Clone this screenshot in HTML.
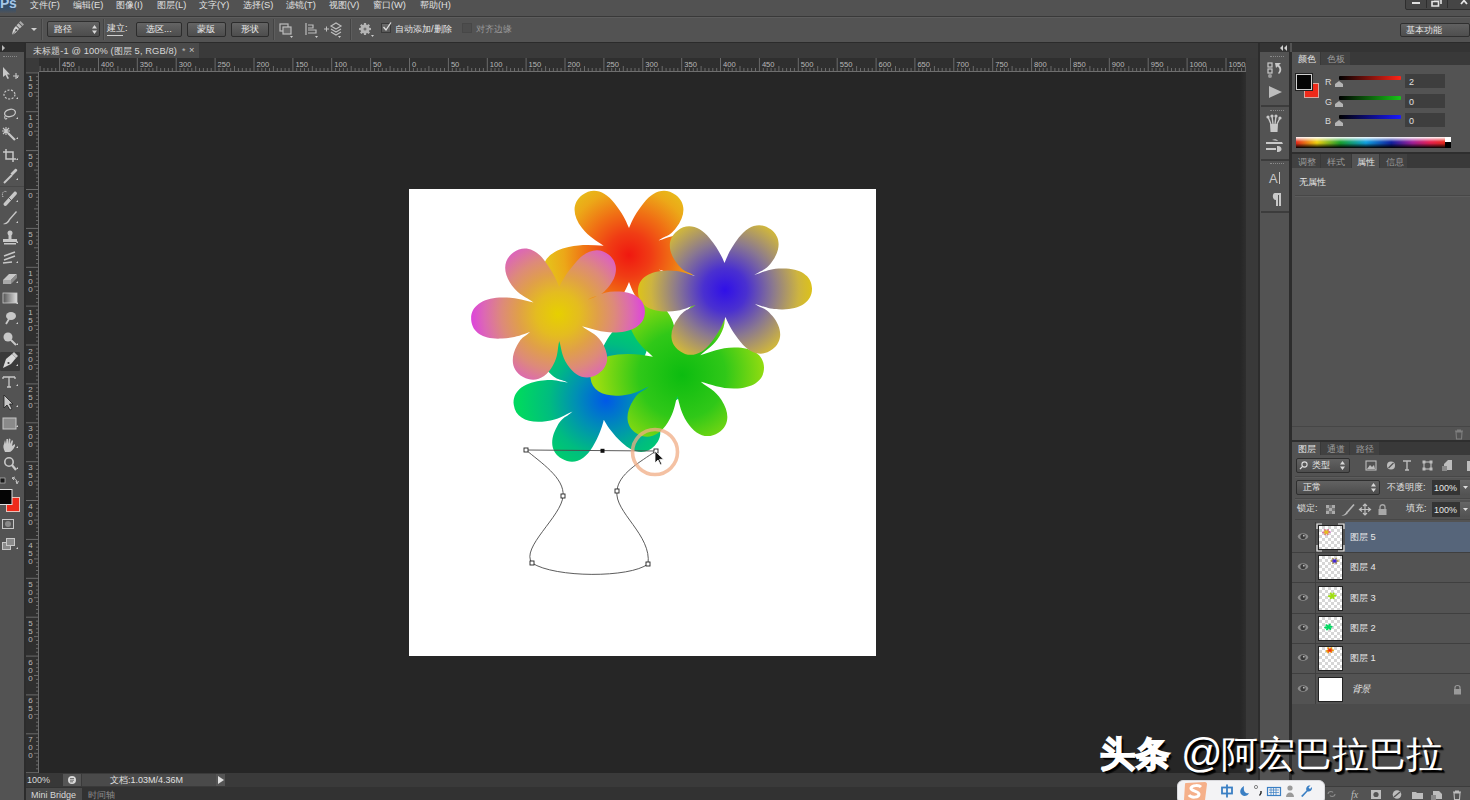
<!DOCTYPE html><html><head><meta charset="utf-8"><style>
html,body{margin:0;padding:0;}
body{width:1470px;height:800px;overflow:hidden;position:relative;background:#535353;font-family:"Liberation Sans",sans-serif;}
.a{position:absolute;}
.t{position:absolute;white-space:nowrap;line-height:1;}
svg{position:absolute;overflow:visible;}
</style></head><body>
<div class="a" style="left:0px;top:0px;width:1470px;height:16px;background:#525252;"></div>
<div class="a" style="left:0px;top:16px;width:1470px;height:1px;background:#393939;"></div>
<div class="a" style="left:0px;top:17px;width:1470px;height:1px;background:#5d5d5d;"></div>
<div class="a" style="left:0px;top:0px;width:16px;height:13px;background:linear-gradient(#2a4866,#3a5068 70%,#4f5358);"></div>
<div class="t" style="left:0px;top:-4px;font-size:14px;font-weight:bold;color:#a6c6e6;letter-spacing:-0.3px;">Ps</div>
<div class="t" style="left:30px;top:1px;font-size:9.3px;color:#e0e0e0;">文件(F)</div>
<div class="t" style="left:73px;top:1px;font-size:9.3px;color:#e0e0e0;">编辑(E)</div>
<div class="t" style="left:116px;top:1px;font-size:9.3px;color:#e0e0e0;">图像(I)</div>
<div class="t" style="left:157px;top:1px;font-size:9.3px;color:#e0e0e0;">图层(L)</div>
<div class="t" style="left:199px;top:1px;font-size:9.3px;color:#e0e0e0;">文字(Y)</div>
<div class="t" style="left:243px;top:1px;font-size:9.3px;color:#e0e0e0;">选择(S)</div>
<div class="t" style="left:286px;top:1px;font-size:9.3px;color:#e0e0e0;">滤镜(T)</div>
<div class="t" style="left:329px;top:1px;font-size:9.3px;color:#e0e0e0;">视图(V)</div>
<div class="t" style="left:373px;top:1px;font-size:9.3px;color:#e0e0e0;">窗口(W)</div>
<div class="t" style="left:420px;top:1px;font-size:9.3px;color:#e0e0e0;">帮助(H)</div>
<div class="a" style="left:1405px;top:-2px;width:65px;height:10px;background:#454545;border:1px solid #2e2e2e;border-radius:2px;"></div>
<div class="a" style="left:1426px;top:0px;width:1px;height:8px;background:#2e2e2e;"></div>
<div class="a" style="left:1447px;top:0px;width:1px;height:8px;background:#2e2e2e;"></div>
<div class="a" style="left:1412px;top:2px;width:8px;height:2px;background:#e0e0e0;"></div>
<svg style="left:1430px;top:-3px" width="40" height="10"><path d="M4 2.5 H11 V7 M2 4.5 H8.5 V9 H2Z" fill="none" stroke="#e4e4e4" stroke-width="1.6"/><path d="M31 0 L37 7 M37 0 L31 7" stroke="#e4e4e4" stroke-width="1.8"/></svg>
<div class="a" style="left:0px;top:18px;width:1470px;height:24px;background:#535353;"></div>
<div class="a" style="left:0px;top:42px;width:1470px;height:1px;background:#2b2b2b;"></div>
<svg style="left:8px;top:19px" width="18" height="18" viewBox="0 0 18 18">
<path d="M4 16 C4.5 12 5.5 9 8 7 L11 10 C9 12.5 7 14.5 4 16Z" fill="#d4d4d4"/><path d="M8.5 6.2 L10.5 4.2 L13.8 7.5 L11.8 9.5Z" fill="#bdbdbd"/><path d="M11 3.5 L12.5 2 L16 5.5 L14.5 7Z" fill="#a8a8a8"/>
<circle cx="8.3" cy="11.2" r="1.1" fill="#505050"/><path d="M4 16 L8 11.5" stroke="#505050" stroke-width="0.7"/></svg>
<svg style="left:31px;top:28px" width="6" height="4"><path d="M0 0 L6 0 L3 3Z" fill="#cfcfcf"/></svg>
<div class="a" style="left:41px;top:19px;width:1px;height:21px;background:#444;"></div>
<div class="a" style="left:42px;top:19px;width:1px;height:21px;background:#5e5e5e;"></div>
<div class="a" style="left:47px;top:21px;width:53px;height:16px;background:linear-gradient(#626262,#4c4c4c);border:1px solid #2f2f2f;border-radius:2px;box-sizing:border-box;"></div>
<div class="t" style="left:54px;top:25px;font-size:9.3px;color:#e8e8e8;">路径</div>
<svg style="left:92px;top:25px" width="5" height="9"><path d="M0 3.5 L2.5 0 L5 3.5Z M0 5.5 L2.5 9 L5 5.5Z" fill="#d8d8d8"/></svg>
<div class="a" style="left:103px;top:19px;width:1px;height:21px;background:#444;"></div>
<div class="a" style="left:104px;top:19px;width:1px;height:21px;background:#5e5e5e;"></div>
<div class="t" style="left:107px;top:24px;font-size:9.3px;color:#e8e8e8;">建立:</div>
<div class="a" style="left:107px;top:35px;width:16px;height:1px;background:#cfcfcf;"></div>
<div class="a" style="left:136px;top:22px;width:46px;height:15px;background:linear-gradient(#646464,#4d4d4d);border:1px solid #2c2c2c;border-radius:2px;box-sizing:border-box;"></div>
<div class="t" style="left:146px;top:25px;font-size:9.3px;color:#e8e8e8;">选区...</div>
<div class="a" style="left:187px;top:22px;width:39px;height:15px;background:linear-gradient(#646464,#4d4d4d);border:1px solid #2c2c2c;border-radius:2px;box-sizing:border-box;"></div>
<div class="t" style="left:197px;top:25px;font-size:9.3px;color:#e8e8e8;">蒙版</div>
<div class="a" style="left:231px;top:22px;width:38px;height:15px;background:linear-gradient(#646464,#4d4d4d);border:1px solid #2c2c2c;border-radius:2px;box-sizing:border-box;"></div>
<div class="t" style="left:241px;top:25px;font-size:9.3px;color:#e8e8e8;">形状</div>
<div class="a" style="left:273px;top:19px;width:1px;height:21px;background:#444;"></div>
<div class="a" style="left:274px;top:19px;width:1px;height:21px;background:#5e5e5e;"></div>
<svg style="left:278px;top:21px" width="70" height="18">
<rect x="2" y="3" width="8" height="7" fill="none" stroke="#bdbdbd" stroke-width="1.2"/><rect x="5" y="6" width="8" height="7" fill="#6a6a6a" stroke="#bdbdbd" stroke-width="1.2"/><path d="M12 15 L15 15 L13.5 17Z" fill="#ccc"/>
<path d="M28 2 L28 14 M30 4 h5 v3 h-5 M30 9 h8 v3 h-8" fill="none" stroke="#bdbdbd" stroke-width="1.2"/><path d="M37 15 L40 15 L38.5 17Z" fill="#ccc"/>
<path d="M46 8 h5 M48.5 5.5 v5" stroke="#c0c0c0" stroke-width="1"/><path d="M53 5 L58 2 L63 5 L58 8Z M53 8 L58 11 L63 8 M53 11 L58 14 L63 11" fill="none" stroke="#bdbdbd" stroke-width="1.2"/><path d="M60 15 L63 15 L61.5 17Z" fill="#ccc"/>
</svg>
<div class="a" style="left:350px;top:19px;width:1px;height:21px;background:#444;"></div>
<div class="a" style="left:351px;top:19px;width:1px;height:21px;background:#5e5e5e;"></div>
<svg style="left:358px;top:22px" width="18" height="16"><g transform="translate(7,7)" fill="#b4b4b4">
<circle r="4.6"/><rect x="-1.1" y="-6" width="2.2" height="3" transform="rotate(0)"/><rect x="-1.1" y="-6" width="2.2" height="3" transform="rotate(45)"/><rect x="-1.1" y="-6" width="2.2" height="3" transform="rotate(90)"/><rect x="-1.1" y="-6" width="2.2" height="3" transform="rotate(135)"/><rect x="-1.1" y="-6" width="2.2" height="3" transform="rotate(180)"/><rect x="-1.1" y="-6" width="2.2" height="3" transform="rotate(225)"/><rect x="-1.1" y="-6" width="2.2" height="3" transform="rotate(270)"/><rect x="-1.1" y="-6" width="2.2" height="3" transform="rotate(315)"/><circle r="1.5" fill="#707070"/></g><path d="M13 13 L16 13 L14.5 15Z" fill="#ccc"/></svg>
<div class="a" style="left:381px;top:23px;width:10px;height:10px;background:linear-gradient(#6a6a6a,#585858);border:1px solid #3a3a3a;box-sizing:border-box;"></div>
<svg style="left:381px;top:21px" width="12" height="12"><path d="M2.5 6 L5 9 L10 1.5" fill="none" stroke="#e0e0e0" stroke-width="1.3"/></svg>
<div class="t" style="left:395px;top:25px;font-size:9.3px;color:#e8e8e8;">自动添加/删除</div>
<div class="a" style="left:462px;top:23px;width:10px;height:10px;background:#4d4d4d;border:1px solid #474747;box-sizing:border-box;"></div>
<div class="t" style="left:476px;top:25px;font-size:9.3px;color:#9a9a9a;">对齐边缘</div>
<div class="a" style="left:1400px;top:23px;width:70px;height:14px;background:linear-gradient(#616161,#4e4e4e);border:1px solid #2f2f2f;border-radius:2px;box-sizing:border-box;"></div>
<div class="t" style="left:1406px;top:26px;font-size:9.3px;color:#e8e8e8;">基本功能</div>
<div class="a" style="left:0px;top:43px;width:25px;height:757px;background:#535353;"></div>
<div class="a" style="left:0px;top:43px;width:25px;height:9px;background:#2e2e2e;"></div>
<svg style="left:2px;top:45px" width="4" height="6"><path d="M0 0 L3 3 L0 6Z" fill="#bbb"/></svg>
<div class="a" style="left:24px;top:43px;width:2px;height:757px;background:#2c2c2c;"></div>
<div class="a" style="left:3px;top:56px;width:14px;height:1px;border-top:1px dotted #8a8a8a;"></div>
<div class="a" style="left:0px;top:186px;width:24px;height:1px;background:#474747;"></div>
<div class="a" style="left:0px;top:352px;width:20px;height:19px;background:#3a3a3a;border-radius:1px;"></div>
<svg style="left:0;top:0" width="26" height="560" viewBox="0 0 26 560" fill="#c8c8c8" stroke="#c8c8c8"><path d="M16 78 L18 76 L18 78Z" stroke="none" fill="#d0d0d0"/><path d="M16 99 L18 97 L18 99Z" stroke="none" fill="#d0d0d0"/><path d="M16 119 L18 117 L18 119Z" stroke="none" fill="#d0d0d0"/><path d="M16 139 L18 137 L18 139Z" stroke="none" fill="#d0d0d0"/><path d="M16 160 L18 158 L18 160Z" stroke="none" fill="#d0d0d0"/><path d="M16 180 L18 178 L18 180Z" stroke="none" fill="#d0d0d0"/><path d="M16 202 L18 200 L18 202Z" stroke="none" fill="#d0d0d0"/><path d="M16 223 L18 221 L18 223Z" stroke="none" fill="#d0d0d0"/><path d="M16 243 L18 241 L18 243Z" stroke="none" fill="#d0d0d0"/><path d="M16 263 L18 261 L18 263Z" stroke="none" fill="#d0d0d0"/><path d="M16 283 L18 281 L18 283Z" stroke="none" fill="#d0d0d0"/><path d="M16 304 L18 302 L18 304Z" stroke="none" fill="#d0d0d0"/><path d="M16 324 L18 322 L18 324Z" stroke="none" fill="#d0d0d0"/><path d="M16 345 L18 343 L18 345Z" stroke="none" fill="#d0d0d0"/><path d="M16 366 L18 364 L18 366Z" stroke="none" fill="#d0d0d0"/><path d="M16 386 L18 384 L18 386Z" stroke="none" fill="#d0d0d0"/><path d="M16 407 L18 405 L18 407Z" stroke="none" fill="#d0d0d0"/><path d="M16 427 L18 425 L18 427Z" stroke="none" fill="#d0d0d0"/><path d="M16 448 L18 446 L18 448Z" stroke="none" fill="#d0d0d0"/><path d="M16 469 L18 467 L18 469Z" stroke="none" fill="#d0d0d0"/>
<path d="M3 67 L3 77 L5.5 75 L7.5 79 L9 78.3 L7 74.5 L10 74.5Z" stroke="none"/>
<path d="M13 76 h6 M16 73 v6" stroke-width="1.1" fill="none"/>
<ellipse cx="9.5" cy="94.5" rx="5.5" ry="4.5" fill="none" stroke-width="1.2" stroke-dasharray="2 1.5"/>
<ellipse cx="10" cy="113" rx="5.5" ry="3.6" fill="none" stroke-width="1.3" transform="rotate(-15 10 113)"/><path d="M5 116 C4 119 6 120 7 118" fill="none" stroke-width="1.1"/>
<path d="M3 128 L9 134 M9 128 L3 134 M6 127 V135 M2 131 H10" stroke-width="1.1" fill="none"/><path d="M8 133 L15 140" stroke-width="2.2" fill="none"/>
<path d="M6 149 V159 H16 M3 152 H13 V162" fill="none" stroke-width="1.5"/>
<path d="M4 183 L12 175" stroke-width="2" fill="none"/><path d="M10.5 173.5 L15 169 C16 168 18 170 17 171 L12.5 175.5Z" stroke="none"/>
<path d="M4 203 L14 192 C15.5 190.5 18 193 16.5 194.5 L6.5 205.5 C5 207 2.5 204.5 4 203Z" stroke="none"/><path d="M8 197 L12 201" stroke="#535353" stroke-width="0.9"/><path d="M3 197 C1 193 4 190 7 192" fill="none" stroke-width="1" stroke-dasharray="1.2 1"/>
<path d="M3 224 C6 223 8 221 9 219 L16 211 L17 212 L10 220 C9 223 6 225 3 224Z" stroke="none"/>
<circle cx="10" cy="233" r="2.5" stroke="none"/><rect x="8.5" y="234" width="3" height="5" stroke="none"/><rect x="3" y="239" width="14" height="3" stroke="none"/><rect x="4" y="243" width="12" height="1.5" stroke="none"/>
<path d="M4 256 L15 252 M4 260 L15 256 M3 263 L12 262" stroke-width="1.6" fill="none"/>
<path d="M3 280 L9 274 L17 274 L11 280Z" stroke="none"/><path d="M3 280 L11 280 L11 284 L3 284Z" stroke="none" fill="#a8a8a8"/><path d="M11 280 L17 274 L17 278 L11 284Z" stroke="none" fill="#8a8a8a"/>
<defs><linearGradient id="tg" x1="0" x2="1"><stop offset="0" stop-color="#555"/><stop offset="1" stop-color="#ddd"/></linearGradient></defs>
<rect x="3" y="293" width="14" height="10" fill="url(#tg)" stroke="#c8c8c8" stroke-width="0.8"/>
<path d="M6 324 L9 319" stroke-width="1.8" fill="none"/><ellipse cx="11" cy="316" rx="5" ry="4" stroke="none"/>
<circle cx="8" cy="337" r="4.5" stroke="none"/><path d="M11 340 L16 345" stroke-width="2" fill="none"/>
<path d="M3 368 L6 359 L12 354 L16 358 L11 364Z" stroke="none" fill="#d8d8d8"/><path d="M12 354 L14 352 L18 356 L16 358Z" stroke="none"/><circle cx="8.5" cy="363" r="1.1" fill="#3a3a3a" stroke="none"/>
<path d="M3 377 H15 M9 377 V387 M7 387 H11 M3 377 V379 M15 377 V379" fill="none" stroke-width="1.3"/>
<path d="M4 395 L4 408 L7 405 L10 410 L12 409 L9.5 404 L13 404Z" stroke="#222" stroke-width="0.8" fill="#c8c8c8"/>
<rect x="3" y="418" width="13" height="11" fill="#8a8a8a" stroke="#c8c8c8" stroke-width="1"/>
<path d="M5 452 C3 448 3 446 4 444 L5 440 L6 444 L6.5 439 L8 439 L8 444 L9 438.5 L10.5 439 L10 444 L12 440 L13 441 L12 446 L15 444 L15 446 C13 450 11 452 9 452Z" stroke="none"/>
<circle cx="9" cy="462" r="4.2" fill="none" stroke-width="1.6"/><path d="M12 465 L16 470" stroke-width="2.2" fill="none"/>
<rect x="0" y="478" width="5" height="5" fill="#1a1a1a" stroke="#ccc" stroke-width="0.6"/>
<path d="M12 478 C15 478 17 480 17 483 M15 477 L12 478 L14 480 M16 481 L17 484 L18.5 481" fill="none" stroke-width="0.9"/>
<rect x="6.5" y="497.5" width="13" height="14" fill="#ee2a1a" stroke="#e8c0b8" stroke-width="1"/>
<rect x="-1" y="489.5" width="13" height="15" fill="#050505" stroke="#e0e0e0" stroke-width="1"/>
<rect x="2.5" y="519.5" width="11" height="9" fill="none" stroke-width="1"/><circle cx="8" cy="524" r="3" stroke="none" fill="#8a8a8a"/>
<rect x="2.5" y="542.5" width="8" height="7" fill="#8a8a8a" stroke-width="1"/><rect x="6.5" y="538.5" width="8" height="7" fill="#8a8a8a" stroke-width="1"/>
<path d="M16 549 L18 547 L18 549Z" stroke="none" fill="#d0d0d0"/>
</svg>
<div class="a" style="left:26px;top:43px;width:1232px;height:15px;background:#3a3a3a;"></div>
<div class="a" style="left:26px;top:43px;width:173px;height:15px;background:#4a4a4a;"></div>
<div class="t" style="left:33px;top:47px;font-size:9.3px;color:#d8d8d8;letter-spacing:0.1px;">未标题-1 @ 100% (图层 5, RGB/8)</div>
<div class="t" style="left:182px;top:47px;font-size:9px;color:#bbbbbb;">*</div>
<div class="t" style="left:189px;top:46px;font-size:9.3px;color:#cfcfcf;">×</div>
<div class="a" style="left:26px;top:58px;width:1220px;height:14px;background:#2f2f2f;"></div>
<div class="a" style="left:26px;top:58px;width:13px;height:715px;background:#2f2f2f;"></div>
<div class="a" style="left:26px;top:58px;width:13px;height:14px;background:#3a3a3a;"></div>
<div class="a" style="left:39px;top:72px;width:1207px;height:701px;background:#262626;"></div>
<svg style="left:0;top:0" width="1470" height="800" viewBox="0 0 1470 800"><text x="62.1" y="66.5" font-size="7.6" font-family="Liberation Sans" fill="#b8b8b8">450</text><text x="101.0" y="66.5" font-size="7.6" font-family="Liberation Sans" fill="#b8b8b8">400</text><text x="139.8" y="66.5" font-size="7.6" font-family="Liberation Sans" fill="#b8b8b8">350</text><text x="178.7" y="66.5" font-size="7.6" font-family="Liberation Sans" fill="#b8b8b8">300</text><text x="217.6" y="66.5" font-size="7.6" font-family="Liberation Sans" fill="#b8b8b8">250</text><text x="256.5" y="66.5" font-size="7.6" font-family="Liberation Sans" fill="#b8b8b8">200</text><text x="295.4" y="66.5" font-size="7.6" font-family="Liberation Sans" fill="#b8b8b8">150</text><text x="334.2" y="66.5" font-size="7.6" font-family="Liberation Sans" fill="#b8b8b8">100</text><text x="373.1" y="66.5" font-size="7.6" font-family="Liberation Sans" fill="#b8b8b8">50</text><text x="412.0" y="66.5" font-size="7.6" font-family="Liberation Sans" fill="#b8b8b8">0</text><text x="450.9" y="66.5" font-size="7.6" font-family="Liberation Sans" fill="#b8b8b8">50</text><text x="489.8" y="66.5" font-size="7.6" font-family="Liberation Sans" fill="#b8b8b8">100</text><text x="528.6" y="66.5" font-size="7.6" font-family="Liberation Sans" fill="#b8b8b8">150</text><text x="567.5" y="66.5" font-size="7.6" font-family="Liberation Sans" fill="#b8b8b8">200</text><text x="606.4" y="66.5" font-size="7.6" font-family="Liberation Sans" fill="#b8b8b8">250</text><text x="645.3" y="66.5" font-size="7.6" font-family="Liberation Sans" fill="#b8b8b8">300</text><text x="684.2" y="66.5" font-size="7.6" font-family="Liberation Sans" fill="#b8b8b8">350</text><text x="723.0" y="66.5" font-size="7.6" font-family="Liberation Sans" fill="#b8b8b8">400</text><text x="761.9" y="66.5" font-size="7.6" font-family="Liberation Sans" fill="#b8b8b8">450</text><text x="800.8" y="66.5" font-size="7.6" font-family="Liberation Sans" fill="#b8b8b8">500</text><text x="839.7" y="66.5" font-size="7.6" font-family="Liberation Sans" fill="#b8b8b8">550</text><text x="878.6" y="66.5" font-size="7.6" font-family="Liberation Sans" fill="#b8b8b8">600</text><text x="917.4" y="66.5" font-size="7.6" font-family="Liberation Sans" fill="#b8b8b8">650</text><text x="956.3" y="66.5" font-size="7.6" font-family="Liberation Sans" fill="#b8b8b8">700</text><text x="995.2" y="66.5" font-size="7.6" font-family="Liberation Sans" fill="#b8b8b8">750</text><text x="1034.1" y="66.5" font-size="7.6" font-family="Liberation Sans" fill="#b8b8b8">800</text><text x="1073.0" y="66.5" font-size="7.6" font-family="Liberation Sans" fill="#b8b8b8">850</text><text x="1111.8" y="66.5" font-size="7.6" font-family="Liberation Sans" fill="#b8b8b8">900</text><text x="1150.7" y="66.5" font-size="7.6" font-family="Liberation Sans" fill="#b8b8b8">950</text><text x="1189.6" y="66.5" font-size="7.6" font-family="Liberation Sans" fill="#b8b8b8">1000</text><text x="1228.5" y="66.5" font-size="7.6" font-family="Liberation Sans" fill="#b8b8b8">1050</text><text x="28.2" y="81.4" font-size="8" font-family="Liberation Sans" fill="#b8b8b8">1</text><text x="28.2" y="89.4" font-size="8" font-family="Liberation Sans" fill="#b8b8b8">5</text><text x="28.2" y="97.4" font-size="8" font-family="Liberation Sans" fill="#b8b8b8">0</text><text x="28.2" y="120.2" font-size="8" font-family="Liberation Sans" fill="#b8b8b8">1</text><text x="28.2" y="128.2" font-size="8" font-family="Liberation Sans" fill="#b8b8b8">0</text><text x="28.2" y="136.2" font-size="8" font-family="Liberation Sans" fill="#b8b8b8">0</text><text x="28.2" y="159.1" font-size="8" font-family="Liberation Sans" fill="#b8b8b8">5</text><text x="28.2" y="167.1" font-size="8" font-family="Liberation Sans" fill="#b8b8b8">0</text><text x="28.2" y="198.0" font-size="8" font-family="Liberation Sans" fill="#b8b8b8">0</text><text x="28.2" y="236.9" font-size="8" font-family="Liberation Sans" fill="#b8b8b8">5</text><text x="28.2" y="244.9" font-size="8" font-family="Liberation Sans" fill="#b8b8b8">0</text><text x="28.2" y="275.8" font-size="8" font-family="Liberation Sans" fill="#b8b8b8">1</text><text x="28.2" y="283.8" font-size="8" font-family="Liberation Sans" fill="#b8b8b8">0</text><text x="28.2" y="291.8" font-size="8" font-family="Liberation Sans" fill="#b8b8b8">0</text><text x="28.2" y="314.6" font-size="8" font-family="Liberation Sans" fill="#b8b8b8">1</text><text x="28.2" y="322.6" font-size="8" font-family="Liberation Sans" fill="#b8b8b8">5</text><text x="28.2" y="330.6" font-size="8" font-family="Liberation Sans" fill="#b8b8b8">0</text><text x="28.2" y="353.5" font-size="8" font-family="Liberation Sans" fill="#b8b8b8">2</text><text x="28.2" y="361.5" font-size="8" font-family="Liberation Sans" fill="#b8b8b8">0</text><text x="28.2" y="369.5" font-size="8" font-family="Liberation Sans" fill="#b8b8b8">0</text><text x="28.2" y="392.4" font-size="8" font-family="Liberation Sans" fill="#b8b8b8">2</text><text x="28.2" y="400.4" font-size="8" font-family="Liberation Sans" fill="#b8b8b8">5</text><text x="28.2" y="408.4" font-size="8" font-family="Liberation Sans" fill="#b8b8b8">0</text><text x="28.2" y="431.3" font-size="8" font-family="Liberation Sans" fill="#b8b8b8">3</text><text x="28.2" y="439.3" font-size="8" font-family="Liberation Sans" fill="#b8b8b8">0</text><text x="28.2" y="447.3" font-size="8" font-family="Liberation Sans" fill="#b8b8b8">0</text><text x="28.2" y="470.2" font-size="8" font-family="Liberation Sans" fill="#b8b8b8">3</text><text x="28.2" y="478.2" font-size="8" font-family="Liberation Sans" fill="#b8b8b8">5</text><text x="28.2" y="486.2" font-size="8" font-family="Liberation Sans" fill="#b8b8b8">0</text><text x="28.2" y="509.0" font-size="8" font-family="Liberation Sans" fill="#b8b8b8">4</text><text x="28.2" y="517.0" font-size="8" font-family="Liberation Sans" fill="#b8b8b8">0</text><text x="28.2" y="525.0" font-size="8" font-family="Liberation Sans" fill="#b8b8b8">0</text><text x="28.2" y="547.9" font-size="8" font-family="Liberation Sans" fill="#b8b8b8">4</text><text x="28.2" y="555.9" font-size="8" font-family="Liberation Sans" fill="#b8b8b8">5</text><text x="28.2" y="563.9" font-size="8" font-family="Liberation Sans" fill="#b8b8b8">0</text><text x="28.2" y="586.8" font-size="8" font-family="Liberation Sans" fill="#b8b8b8">5</text><text x="28.2" y="594.8" font-size="8" font-family="Liberation Sans" fill="#b8b8b8">0</text><text x="28.2" y="602.8" font-size="8" font-family="Liberation Sans" fill="#b8b8b8">0</text><text x="28.2" y="625.7" font-size="8" font-family="Liberation Sans" fill="#b8b8b8">5</text><text x="28.2" y="633.7" font-size="8" font-family="Liberation Sans" fill="#b8b8b8">5</text><text x="28.2" y="641.7" font-size="8" font-family="Liberation Sans" fill="#b8b8b8">0</text><text x="28.2" y="664.6" font-size="8" font-family="Liberation Sans" fill="#b8b8b8">6</text><text x="28.2" y="672.6" font-size="8" font-family="Liberation Sans" fill="#b8b8b8">0</text><text x="28.2" y="680.6" font-size="8" font-family="Liberation Sans" fill="#b8b8b8">0</text><text x="28.2" y="703.4" font-size="8" font-family="Liberation Sans" fill="#b8b8b8">6</text><text x="28.2" y="711.4" font-size="8" font-family="Liberation Sans" fill="#b8b8b8">5</text><text x="28.2" y="719.4" font-size="8" font-family="Liberation Sans" fill="#b8b8b8">0</text><text x="28.2" y="742.3" font-size="8" font-family="Liberation Sans" fill="#b8b8b8">7</text><text x="28.2" y="750.3" font-size="8" font-family="Liberation Sans" fill="#b8b8b8">0</text><text x="28.2" y="758.3" font-size="8" font-family="Liberation Sans" fill="#b8b8b8">0</text><text x="28.2" y="781.2" font-size="8" font-family="Liberation Sans" fill="#b8b8b8">7</text><text x="28.2" y="789.2" font-size="8" font-family="Liberation Sans" fill="#b8b8b8">5</text><text x="28.2" y="797.2" font-size="8" font-family="Liberation Sans" fill="#b8b8b8">0</text><path d="M40.1 66V71 M44.0 68V71 M47.9 68V71 M51.8 68V71 M55.7 68V71 M59.6 58V71 M63.5 68V71 M67.4 68V71 M71.2 68V71 M75.1 68V71 M79.0 66V71 M82.9 68V71 M86.8 68V71 M90.7 68V71 M94.6 68V71 M98.5 58V71 M102.3 68V71 M106.2 68V71 M110.1 68V71 M114.0 68V71 M117.9 66V71 M121.8 68V71 M125.7 68V71 M129.6 68V71 M133.5 68V71 M137.3 58V71 M141.2 68V71 M145.1 68V71 M149.0 68V71 M152.9 68V71 M156.8 66V71 M160.7 68V71 M164.6 68V71 M168.4 68V71 M172.3 68V71 M176.2 58V71 M180.1 68V71 M184.0 68V71 M187.9 68V71 M191.8 68V71 M195.7 66V71 M199.5 68V71 M203.4 68V71 M207.3 68V71 M211.2 68V71 M215.1 58V71 M219.0 68V71 M222.9 68V71 M226.8 68V71 M230.7 68V71 M234.5 66V71 M238.4 68V71 M242.3 68V71 M246.2 68V71 M250.1 68V71 M254.0 58V71 M257.9 68V71 M261.8 68V71 M265.6 68V71 M269.5 68V71 M273.4 66V71 M277.3 68V71 M281.2 68V71 M285.1 68V71 M289.0 68V71 M292.9 58V71 M296.7 68V71 M300.6 68V71 M304.5 68V71 M308.4 68V71 M312.3 66V71 M316.2 68V71 M320.1 68V71 M324.0 68V71 M327.9 68V71 M331.7 58V71 M335.6 68V71 M339.5 68V71 M343.4 68V71 M347.3 68V71 M351.2 66V71 M355.1 68V71 M359.0 68V71 M362.8 68V71 M366.7 68V71 M370.6 58V71 M374.5 68V71 M378.4 68V71 M382.3 68V71 M386.2 68V71 M390.1 66V71 M393.9 68V71 M397.8 68V71 M401.7 68V71 M405.6 68V71 M409.5 58V71 M413.4 68V71 M417.3 68V71 M421.2 68V71 M425.1 68V71 M428.9 66V71 M432.8 68V71 M436.7 68V71 M440.6 68V71 M444.5 68V71 M448.4 58V71 M452.3 68V71 M456.2 68V71 M460.0 68V71 M463.9 68V71 M467.8 66V71 M471.7 68V71 M475.6 68V71 M479.5 68V71 M483.4 68V71 M487.3 58V71 M491.1 68V71 M495.0 68V71 M498.9 68V71 M502.8 68V71 M506.7 66V71 M510.6 68V71 M514.5 68V71 M518.4 68V71 M522.3 68V71 M526.1 58V71 M530.0 68V71 M533.9 68V71 M537.8 68V71 M541.7 68V71 M545.6 66V71 M549.5 68V71 M553.4 68V71 M557.2 68V71 M561.1 68V71 M565.0 58V71 M568.9 68V71 M572.8 68V71 M576.7 68V71 M580.6 68V71 M584.5 66V71 M588.3 68V71 M592.2 68V71 M596.1 68V71 M600.0 68V71 M603.9 58V71 M607.8 68V71 M611.7 68V71 M615.6 68V71 M619.5 68V71 M623.3 66V71 M627.2 68V71 M631.1 68V71 M635.0 68V71 M638.9 68V71 M642.8 58V71 M646.7 68V71 M650.6 68V71 M654.4 68V71 M658.3 68V71 M662.2 66V71 M666.1 68V71 M670.0 68V71 M673.9 68V71 M677.8 68V71 M681.7 58V71 M685.5 68V71 M689.4 68V71 M693.3 68V71 M697.2 68V71 M701.1 66V71 M705.0 68V71 M708.9 68V71 M712.8 68V71 M716.7 68V71 M720.5 58V71 M724.4 68V71 M728.3 68V71 M732.2 68V71 M736.1 68V71 M740.0 66V71 M743.9 68V71 M747.8 68V71 M751.6 68V71 M755.5 68V71 M759.4 58V71 M763.3 68V71 M767.2 68V71 M771.1 68V71 M775.0 68V71 M778.9 66V71 M782.7 68V71 M786.6 68V71 M790.5 68V71 M794.4 68V71 M798.3 58V71 M802.2 68V71 M806.1 68V71 M810.0 68V71 M813.9 68V71 M817.7 66V71 M821.6 68V71 M825.5 68V71 M829.4 68V71 M833.3 68V71 M837.2 58V71 M841.1 68V71 M845.0 68V71 M848.8 68V71 M852.7 68V71 M856.6 66V71 M860.5 68V71 M864.4 68V71 M868.3 68V71 M872.2 68V71 M876.1 58V71 M879.9 68V71 M883.8 68V71 M887.7 68V71 M891.6 68V71 M895.5 66V71 M899.4 68V71 M903.3 68V71 M907.2 68V71 M911.1 68V71 M914.9 58V71 M918.8 68V71 M922.7 68V71 M926.6 68V71 M930.5 68V71 M934.4 66V71 M938.3 68V71 M942.2 68V71 M946.0 68V71 M949.9 68V71 M953.8 58V71 M957.7 68V71 M961.6 68V71 M965.5 68V71 M969.4 68V71 M973.3 66V71 M977.1 68V71 M981.0 68V71 M984.9 68V71 M988.8 68V71 M992.7 58V71 M996.6 68V71 M1000.5 68V71 M1004.4 68V71 M1008.3 68V71 M1012.1 66V71 M1016.0 68V71 M1019.9 68V71 M1023.8 68V71 M1027.7 68V71 M1031.6 58V71 M1035.5 68V71 M1039.4 68V71 M1043.2 68V71 M1047.1 68V71 M1051.0 66V71 M1054.9 68V71 M1058.8 68V71 M1062.7 68V71 M1066.6 68V71 M1070.5 58V71 M1074.3 68V71 M1078.2 68V71 M1082.1 68V71 M1086.0 68V71 M1089.9 66V71 M1093.8 68V71 M1097.7 68V71 M1101.6 68V71 M1105.5 68V71 M1109.3 58V71 M1113.2 68V71 M1117.1 68V71 M1121.0 68V71 M1124.9 68V71 M1128.8 66V71 M1132.7 68V71 M1136.6 68V71 M1140.4 68V71 M1144.3 68V71 M1148.2 58V71 M1152.1 68V71 M1156.0 68V71 M1159.9 68V71 M1163.8 68V71 M1167.7 66V71 M1171.5 68V71 M1175.4 68V71 M1179.3 68V71 M1183.2 68V71 M1187.1 58V71 M1191.0 68V71 M1194.9 68V71 M1198.8 68V71 M1202.7 68V71 M1206.5 66V71 M1210.4 68V71 M1214.3 68V71 M1218.2 68V71 M1222.1 68V71 M1226.0 58V71 M1229.9 68V71 M1233.8 68V71 M1237.6 68V71 M1241.5 68V71 M1245.4 66V71 M26 72.9H39 M36 76.7H39 M36 80.6H39 M36 84.5H39 M36 88.4H39 M34 92.3H39 M36 96.2H39 M36 100.1H39 M36 104.0H39 M36 107.9H39 M26 111.7H39 M36 115.6H39 M36 119.5H39 M36 123.4H39 M36 127.3H39 M34 131.2H39 M36 135.1H39 M36 139.0H39 M36 142.8H39 M36 146.7H39 M26 150.6H39 M36 154.5H39 M36 158.4H39 M36 162.3H39 M36 166.2H39 M34 170.1H39 M36 173.9H39 M36 177.8H39 M36 181.7H39 M36 185.6H39 M26 189.5H39 M36 193.4H39 M36 197.3H39 M36 201.2H39 M36 205.1H39 M34 208.9H39 M36 212.8H39 M36 216.7H39 M36 220.6H39 M36 224.5H39 M26 228.4H39 M36 232.3H39 M36 236.2H39 M36 240.0H39 M36 243.9H39 M34 247.8H39 M36 251.7H39 M36 255.6H39 M36 259.5H39 M36 263.4H39 M26 267.3H39 M36 271.1H39 M36 275.0H39 M36 278.9H39 M36 282.8H39 M34 286.7H39 M36 290.6H39 M36 294.5H39 M36 298.4H39 M36 302.3H39 M26 306.1H39 M36 310.0H39 M36 313.9H39 M36 317.8H39 M36 321.7H39 M34 325.6H39 M36 329.5H39 M36 333.4H39 M36 337.2H39 M36 341.1H39 M26 345.0H39 M36 348.9H39 M36 352.8H39 M36 356.7H39 M36 360.6H39 M34 364.5H39 M36 368.3H39 M36 372.2H39 M36 376.1H39 M36 380.0H39 M26 383.9H39 M36 387.8H39 M36 391.7H39 M36 395.6H39 M36 399.5H39 M34 403.3H39 M36 407.2H39 M36 411.1H39 M36 415.0H39 M36 418.9H39 M26 422.8H39 M36 426.7H39 M36 430.6H39 M36 434.4H39 M36 438.3H39 M34 442.2H39 M36 446.1H39 M36 450.0H39 M36 453.9H39 M36 457.8H39 M26 461.7H39 M36 465.5H39 M36 469.4H39 M36 473.3H39 M36 477.2H39 M34 481.1H39 M36 485.0H39 M36 488.9H39 M36 492.8H39 M36 496.7H39 M26 500.5H39 M36 504.4H39 M36 508.3H39 M36 512.2H39 M36 516.1H39 M34 520.0H39 M36 523.9H39 M36 527.8H39 M36 531.6H39 M36 535.5H39 M26 539.4H39 M36 543.3H39 M36 547.2H39 M36 551.1H39 M36 555.0H39 M34 558.9H39 M36 562.7H39 M36 566.6H39 M36 570.5H39 M36 574.4H39 M26 578.3H39 M36 582.2H39 M36 586.1H39 M36 590.0H39 M36 593.9H39 M34 597.7H39 M36 601.6H39 M36 605.5H39 M36 609.4H39 M36 613.3H39 M26 617.2H39 M36 621.1H39 M36 625.0H39 M36 628.8H39 M36 632.7H39 M34 636.6H39 M36 640.5H39 M36 644.4H39 M36 648.3H39 M36 652.2H39 M26 656.1H39 M36 659.9H39 M36 663.8H39 M36 667.7H39 M36 671.6H39 M34 675.5H39 M36 679.4H39 M36 683.3H39 M36 687.2H39 M36 691.1H39 M26 694.9H39 M36 698.8H39 M36 702.7H39 M36 706.6H39 M36 710.5H39 M34 714.4H39 M36 718.3H39 M36 722.2H39 M36 726.0H39 M36 729.9H39 M26 733.8H39 M36 737.7H39 M36 741.6H39 M36 745.5H39 M36 749.4H39 M34 753.3H39 M36 757.1H39 M36 761.0H39 M36 764.9H39 M36 768.8H39 M26 772.7H39" stroke="#7a7a7a" stroke-width="0.8" fill="none"/><path d="M39 71.5H1246 M38.5 72V773" stroke="#6e6e6e" stroke-width="1" fill="none"/></svg>
<div class="a" style="left:409px;top:189px;width:467px;height:467px;background:#ffffff;"></div>
<svg style="left:0;top:0" width="1470" height="800" viewBox="0 0 1470 800"><defs><radialGradient id="fa" gradientUnits="userSpaceOnUse" cx="629" cy="255" r="87.0"><stop offset="0" stop-color="#f01810"/><stop offset="0.25" stop-color="#f03c14"/><stop offset="0.5" stop-color="#f07014"/><stop offset="0.75" stop-color="#eca818"/><stop offset="1" stop-color="#e4c81c"/></radialGradient><radialGradient id="fe" gradientUnits="userSpaceOnUse" cx="606" cy="400" r="87.0"><stop offset="0" stop-color="#0058e8"/><stop offset="0.35" stop-color="#0090b4"/><stop offset="0.65" stop-color="#00bc80"/><stop offset="1" stop-color="#00d860"/></radialGradient><radialGradient id="fd" gradientUnits="userSpaceOnUse" cx="682" cy="375" r="87.0"><stop offset="0" stop-color="#0cbc10"/><stop offset="0.5" stop-color="#30c818"/><stop offset="1" stop-color="#9ede10"/></radialGradient><radialGradient id="fc" gradientUnits="userSpaceOnUse" cx="725" cy="290" r="87.0"><stop offset="0" stop-color="#3010e8"/><stop offset="0.25" stop-color="#4a30d0"/><stop offset="0.55" stop-color="#8a7890"/><stop offset="0.85" stop-color="#cdb440"/><stop offset="1" stop-color="#dcc21a"/></radialGradient><radialGradient id="fb" gradientUnits="userSpaceOnUse" cx="558" cy="314" r="87.0"><stop offset="0" stop-color="#e6d000"/><stop offset="0.25" stop-color="#e4bc20"/><stop offset="0.45" stop-color="#e0a048"/><stop offset="0.65" stop-color="#dd8a7a"/><stop offset="0.85" stop-color="#dc68b4"/><stop offset="1" stop-color="#dd44dc"/></radialGradient></defs><path d="M658.7 240.5 C669.1 237.5 672.5 234.5 686.4 234.5 C703.8 234.5 716.0 241.5 716.0 255.0 C716.0 268.5 703.8 275.5 686.4 275.5 C672.5 275.5 669.1 272.5 658.7 269.5 C665.4 274.3 665.5 268.4 672.0 276.7 C680.1 287.1 680.3 298.7 669.6 307.0 C659.0 315.3 647.8 312.3 639.7 301.9 C633.2 293.6 632.1 289.7 629.0 282.0 C625.5 290.8 621.8 297.6 614.3 307.1 C604.9 319.1 592.9 323.2 582.2 314.9 C571.5 306.6 572.6 293.9 582.0 281.9 C589.5 272.3 593.3 278.0 601.0 272.5 C591.4 277.6 590.7 284.1 577.1 287.0 C560.1 290.6 546.7 286.3 543.9 273.1 C541.1 259.9 551.6 250.5 568.6 246.9 C582.2 244.0 592.8 245.0 603.6 245.8 C595.9 240.2 589.5 237.7 582.0 228.1 C572.6 216.1 571.5 203.4 582.2 195.1 C592.9 186.8 604.9 190.9 614.3 202.9 C621.8 212.4 625.5 219.2 629.0 228.0 C632.5 219.2 636.2 212.4 643.7 202.9 C653.1 190.9 665.1 186.8 675.8 195.1 C686.5 203.4 685.4 216.1 676.0 228.1 C668.5 237.7 666.4 235.0 658.7 240.5 Z" fill="url(#fa)"/><path d="M627.4 374.5 C637.3 370.1 640.2 366.6 654.0 364.7 C671.2 362.3 684.3 367.5 686.2 380.9 C688.0 394.3 676.9 402.9 659.7 405.3 C645.9 407.2 642.1 404.8 631.4 403.2 C639.8 407.6 641.6 404.7 650.3 413.1 C661.3 423.7 664.1 436.1 654.7 445.8 C645.3 455.5 632.8 453.1 621.8 442.6 C613.1 434.1 608.5 428.0 603.8 419.7 C601.5 429.0 598.8 436.2 592.7 446.7 C585.1 459.9 573.7 465.6 562.0 458.8 C550.3 452.1 549.6 439.4 557.2 426.2 C563.2 415.7 565.8 418.0 572.6 411.5 C562.7 415.9 559.8 419.4 546.0 421.3 C528.8 423.7 515.7 418.5 513.8 405.1 C512.0 391.7 523.1 383.1 540.3 380.7 C554.1 378.8 557.9 381.2 568.6 382.8 C560.2 378.4 558.4 381.3 549.7 372.9 C538.7 362.3 535.9 349.9 545.3 340.2 C554.7 330.5 567.2 332.9 578.2 343.4 C586.9 351.9 591.5 358.0 596.2 366.3 C598.5 357.0 601.2 349.8 607.3 339.3 C614.9 326.1 626.3 320.4 638.0 327.2 C649.7 333.9 650.4 346.6 642.8 359.8 C636.8 370.3 634.2 368.0 627.4 374.5 Z" fill="url(#fe)"/><path d="M700.3 355.3 C710.6 352.1 720.1 347.7 734.1 347.5 C751.5 347.2 763.8 354.0 764.0 367.5 C764.2 381.0 752.2 388.2 734.8 388.5 C720.9 388.7 711.3 384.5 700.8 381.7 C708.0 387.9 714.9 389.7 721.5 399.9 C729.8 412.7 729.7 425.4 718.4 432.7 C707.0 440.1 695.4 435.0 687.1 422.2 C680.5 412.0 680.0 405.1 677.2 396.0 C674.7 405.1 674.2 412.1 667.8 422.4 C659.7 435.3 648.2 440.6 636.7 433.5 C625.3 426.3 625.0 413.6 633.0 400.7 C639.5 390.4 641.9 392.8 649.0 386.5 C638.9 390.6 635.9 393.9 622.0 395.4 C604.7 397.2 591.9 391.5 590.5 378.1 C589.1 364.6 600.4 356.4 617.8 354.6 C631.6 353.2 642.2 354.8 652.9 356.7 C646.1 350.2 640.2 346.3 634.2 335.8 C626.6 322.6 627.3 309.9 639.0 303.2 C650.7 296.4 662.1 302.1 669.7 315.3 C675.8 325.8 674.7 332.8 677.0 342.0 C679.3 332.8 678.2 325.8 684.3 315.3 C691.9 302.1 703.3 296.4 715.0 303.2 C726.7 309.9 727.4 322.6 719.8 335.8 C713.8 346.3 707.1 348.7 700.3 355.3 Z" fill="url(#fd)"/><path d="M754.4 275.0 C764.8 271.8 768.1 268.7 782.1 268.5 C799.5 268.2 811.8 275.0 812.0 288.5 C812.2 302.0 800.2 309.2 782.8 309.5 C768.9 309.7 765.4 306.8 754.9 303.9 C762.7 309.4 764.8 306.6 772.5 316.1 C782.1 327.9 783.3 340.5 772.8 349.1 C762.3 357.6 750.2 353.7 740.6 341.9 C733.0 332.4 729.1 325.8 725.5 317.0 C722.1 325.9 718.5 332.7 711.2 342.4 C702.0 354.5 690.1 358.8 679.3 350.7 C668.5 342.6 669.3 329.9 678.4 317.7 C685.8 308.0 688.0 310.7 695.6 305.0 C685.2 308.2 681.9 311.3 667.9 311.5 C650.5 311.8 638.2 305.0 638.0 291.5 C637.8 278.0 649.8 270.8 667.2 270.5 C681.1 270.3 684.6 273.2 695.1 276.1 C687.3 270.6 685.2 273.4 677.5 263.9 C667.9 252.1 666.7 239.5 677.2 230.9 C687.7 222.4 699.8 226.3 709.4 238.1 C717.0 247.6 720.9 254.2 724.5 263.0 C727.9 254.1 731.5 247.3 738.8 237.6 C748.0 225.5 759.9 221.2 770.7 229.3 C781.5 237.4 780.7 250.1 771.6 262.3 C764.2 272.0 762.0 269.3 754.4 275.0 Z" fill="url(#fc)"/><path d="M587.8 299.8 C598.1 296.4 600.8 292.0 614.7 291.5 C632.1 290.9 644.5 297.4 644.9 311.0 C645.4 324.5 633.5 331.9 616.1 332.5 C602.2 333.0 592.6 328.9 582.1 326.3 C589.0 332.0 595.1 332.4 601.6 341.9 C609.6 353.9 609.5 366.1 598.3 373.7 C587.0 381.3 575.6 376.8 567.6 364.9 C561.1 355.3 561.9 349.5 559.2 341.0 C557.2 349.8 558.5 355.4 552.9 365.5 C545.9 378.1 534.9 383.5 523.1 377.0 C511.3 370.4 510.1 358.2 517.0 345.6 C522.6 335.5 523.8 338.1 530.2 331.7 C520.0 335.5 516.0 337.5 502.1 338.5 C484.8 339.7 472.2 333.6 471.2 320.1 C470.3 306.6 481.9 298.8 499.3 297.6 C513.2 296.6 522.9 300.3 533.5 302.6 C526.0 296.8 519.1 295.3 511.9 285.5 C503.0 273.2 502.4 260.5 513.3 252.5 C524.3 244.6 536.2 249.1 545.1 261.4 C552.2 271.2 556.0 278.1 559.2 287.0 C563.3 278.2 568.1 271.1 576.3 261.7 C586.5 249.9 599.0 246.3 609.2 255.1 C619.4 264.0 617.5 276.8 607.2 288.6 C599.1 298.0 596.0 294.5 587.8 299.8 Z" fill="url(#fb)"/></svg>
<svg style="left:0;top:0" width="1470" height="800" viewBox="0 0 1470 800">
<path d="M526 450 L656 451 C640 462 618 474 617 491 C614 512 652 535 648 564 C630 578 555 578 532 563 C520 548 562 516 563 496 C565 478 540 462 526 450 Z" fill="none" stroke="#4a4a4a" stroke-width="0.9"/>
<g fill="#fff" stroke="#222" stroke-width="0.9">
<rect x="524" y="448" width="4" height="4"/><rect x="654" y="449" width="4" height="4"/>
<rect x="561" y="494" width="4" height="4"/><rect x="615" y="489" width="4" height="4"/>
<rect x="530" y="561" width="4" height="4"/><rect x="646" y="562" width="4" height="4"/>
</g>
<rect x="600.5" y="448.8" width="4" height="4" fill="#111"/>
<circle cx="655" cy="452" r="22.5" fill="none" stroke="#f0ac84" stroke-opacity="0.75" stroke-width="3.6"/>
<path d="M655 451 L655 463 L658 460 L660.5 465 L662 464.3 L659.6 459.4 L663.5 459.2 Z" fill="#111" stroke="#fff" stroke-width="0.8"/>
</svg>
<div class="a" style="left:1246px;top:58px;width:12px;height:715px;background:#393939;"></div>
<div class="a" style="left:1240px;top:72px;width:6px;height:701px;background:linear-gradient(90deg,#262626,#2e2e2e);"></div>
<div class="a" style="left:1258px;top:43px;width:2px;height:757px;background:#2c2c2c;"></div>
<div class="a" style="left:26px;top:773px;width:1220px;height:14px;background:#3a3a3a;"></div>
<div class="a" style="left:26px;top:773px;width:37px;height:14px;background:#383838;"></div>
<div class="a" style="left:1246px;top:773px;width:12px;height:14px;background:#3a3a3a;"></div>
<div class="t" style="left:27px;top:776px;font-size:9px;color:#d8d8d8;">100%</div>
<div class="a" style="left:63px;top:774px;width:18px;height:12px;background:#555;"></div>
<svg style="left:66px;top:775px" width="12" height="10"><circle cx="6" cy="5" r="4" fill="#d8d8d8"/><path d="M4 3.5 H8 M4 5.2 H8 M4 6.8 H7" stroke="#666" stroke-width="0.9"/></svg>
<div class="a" style="left:82px;top:774px;width:134px;height:12px;background:#4a4a4a;"></div>
<div class="t" style="left:110px;top:776px;font-size:9px;color:#e0e0e0;">文档:1.03M/4.36M</div>
<div class="a" style="left:216px;top:774px;width:9px;height:12px;background:#555;"></div>
<svg style="left:218px;top:776px" width="6" height="8"><path d="M0 0 L6 4 L0 8Z" fill="#e0e0e0"/></svg>
<div class="a" style="left:26px;top:787px;width:1232px;height:13px;background:#323232;"></div>
<div class="a" style="left:26px;top:788px;width:56px;height:12px;background:#4a4a4a;"></div>
<div class="t" style="left:31px;top:791px;font-size:9px;color:#d8d8d8;">Mini Bridge</div>
<div class="t" style="left:88px;top:791px;font-size:9px;color:#8c8c8c;">时间轴</div>
<div class="a" style="left:1260px;top:43px;width:30px;height:9px;background:#343434;"></div>
<svg style="left:1280px;top:45px" width="8" height="6"><path d="M3 0 L0 3 L3 6Z M7 0 L4 3 L7 6Z" fill="#cfcfcf"/></svg>
<div class="a" style="left:1260px;top:52px;width:30px;height:748px;background:#535353;"></div>
<div class="a" style="left:1289px;top:52px;width:3px;height:748px;background:#2c2c2c;"></div>
<div class="a" style="left:1261px;top:105px;width:28px;height:2px;background:#3c3c3c;"></div>
<div class="a" style="left:1261px;top:159px;width:28px;height:2px;background:#3c3c3c;"></div>
<div class="a" style="left:1261px;top:211px;width:28px;height:2px;background:#3c3c3c;"></div>
<div class="a" style="left:1270px;top:56px;width:14px;height:1px;border-top:1px dotted #8a8a8a;"></div>
<div class="a" style="left:1270px;top:110px;width:14px;height:1px;border-top:1px dotted #8a8a8a;"></div>
<div class="a" style="left:1270px;top:163px;width:14px;height:1px;border-top:1px dotted #8a8a8a;"></div>
<svg style="left:1262px;top:60px" width="28" height="150" fill="#c8c8c8">
<rect x="6" y="3" width="4" height="4" fill="none" stroke="#c8c8c8" stroke-width="1.2"/><rect x="6" y="9" width="4" height="4" fill="none" stroke="#c8c8c8" stroke-width="1.2"/><circle cx="8" cy="16" r="2" fill="#9a9a9a"/>
<path d="M13 3 L19 3 L17 5 C20 7 20 12 17 14 L16 13 C18 11 18 8 15.5 6.5 L14 8Z"/>
<path d="M7 26 L20 32 L7 38Z" fill="#bdbdbd"/>
<path d="M8 64 L16 64 L15.5 72 L8.5 72Z" fill="#c8c8c8"/><path d="M9 64 L6 57 M11 64 L10 56 M13 64 L14 56 M15 64 L18 58" stroke="#c8c8c8" stroke-width="1.4" fill="none"/><circle cx="6" cy="57" r="1.6"/><circle cx="10" cy="56" r="1.6"/><circle cx="14" cy="56" r="1.6"/><circle cx="18" cy="58" r="1.6"/>
<path d="M4 82 L20 82 L21 84 L4 84Z M10 80 C12 79 15 79 16 81Z M4 88 L14 88 L14 90 L4 90Z M15 86 C21 85 21 93 15 92Z" fill="#c8c8c8"/>
<text x="7" y="123" font-size="13" font-family="Liberation Sans" fill="#c8c8c8">A</text><rect x="17" y="112" width="1" height="12" fill="#c8c8c8"/>
<path d="M13 133 L19 133 L19 146 L17 146 L17 135 L16 135 L16 146 L14 146 L14 140 C10 140 10 133 13 133Z" fill="#c8c8c8"/>
</svg>
<div class="a" style="left:1292px;top:43px;width:178px;height:9px;background:#343434;"></div>
<div class="a" style="left:1292px;top:52px;width:178px;height:748px;background:#535353;"></div>
<div class="a" style="left:1292px;top:52px;width:178px;height:13px;background:#393939;"></div>
<div class="a" style="left:1292px;top:52px;width:28px;height:13px;background:#535353;"></div>
<div class="a" style="left:1321px;top:52px;width:29px;height:13px;background:#414141;"></div>
<div class="t" style="left:1298px;top:55px;font-size:9px;color:#e4e4e4;">颜色</div>
<div class="t" style="left:1327px;top:55px;font-size:9px;color:#9c9c9c;">色板</div>
<div class="a" style="left:1304px;top:83px;width:15px;height:15px;background:#ee2a1a;border:1px solid #d8a8a0;box-sizing:border-box;"></div>
<div class="a" style="left:1296px;top:74px;width:16px;height:16px;background:#050505;border:1px solid #d0d0d0;box-sizing:border-box;outline:1px solid #222;"></div>
<div class="t" style="left:1325px;top:78.0px;font-size:9px;color:#dadada;">R</div>
<div class="a" style="left:1339px;top:76.0px;width:62px;height:4px;background:linear-gradient(90deg,#000,#ff2418);border-radius:1px;"></div>
<svg style="left:1335px;top:81.0px" width="8" height="6"><path d="M0 6 L0 3 L4 0 L8 3 L8 6Z" fill="#b4b4b4"/></svg>
<div class="a" style="left:1405px;top:74.0px;width:40px;height:14px;background:#3e3e3e;"></div>
<div class="t" style="left:1409px;top:78.0px;font-size:9px;color:#e0e0e0;">2</div>
<div class="t" style="left:1325px;top:97.5px;font-size:9px;color:#dadada;">G</div>
<div class="a" style="left:1339px;top:95.5px;width:62px;height:4px;background:linear-gradient(90deg,#000,#18c418);border-radius:1px;"></div>
<svg style="left:1335px;top:100.5px" width="8" height="6"><path d="M0 6 L0 3 L4 0 L8 3 L8 6Z" fill="#b4b4b4"/></svg>
<div class="a" style="left:1405px;top:93.5px;width:40px;height:14px;background:#3e3e3e;"></div>
<div class="t" style="left:1409px;top:97.5px;font-size:9px;color:#e0e0e0;">0</div>
<div class="t" style="left:1325px;top:117.0px;font-size:9px;color:#dadada;">B</div>
<div class="a" style="left:1339px;top:115.0px;width:62px;height:4px;background:linear-gradient(90deg,#000,#1a1aff);border-radius:1px;"></div>
<svg style="left:1335px;top:120.0px" width="8" height="6"><path d="M0 6 L0 3 L4 0 L8 3 L8 6Z" fill="#b4b4b4"/></svg>
<div class="a" style="left:1405px;top:113.0px;width:40px;height:14px;background:#3e3e3e;"></div>
<div class="t" style="left:1409px;top:117.0px;font-size:9px;color:#e0e0e0;">0</div>
<div class="a" style="left:1296px;top:137px;width:149px;height:11px;background:linear-gradient(180deg,rgba(255,255,255,1) 0%,rgba(255,255,255,0) 45%,rgba(0,0,0,0) 55%,rgba(0,0,0,1) 100%),linear-gradient(90deg,#e8281a,#f0d010 14%,#18a030 30%,#10a0e0 47%,#1020a0 64%,#a0209a 78%,#e82050 90%,#e8281a);"></div>
<div class="a" style="left:1445px;top:137px;width:6px;height:5px;background:#ffffff;"></div>
<div class="a" style="left:1445px;top:142px;width:6px;height:6px;background:#000000;"></div>
<div class="a" style="left:1292px;top:152px;width:178px;height:2px;background:#2e2e2e;"></div>
<div class="a" style="left:1292px;top:154px;width:178px;height:14px;background:#393939;"></div>
<div class="a" style="left:1292px;top:154px;width:28px;height:14px;background:#414141;"></div>
<div class="a" style="left:1321px;top:154px;width:30px;height:14px;background:#414141;"></div>
<div class="a" style="left:1352px;top:154px;width:27px;height:14px;background:#535353;"></div>
<div class="a" style="left:1380px;top:154px;width:27px;height:14px;background:#414141;"></div>
<div class="t" style="left:1298px;top:158px;font-size:9px;color:#9c9c9c;">调整</div>
<div class="t" style="left:1327px;top:158px;font-size:9px;color:#9c9c9c;">样式</div>
<div class="t" style="left:1357px;top:158px;font-size:9px;color:#e4e4e4;">属性</div>
<div class="t" style="left:1386px;top:158px;font-size:9px;color:#9c9c9c;">信息</div>
<div class="t" style="left:1299px;top:178px;font-size:9.3px;color:#e8e8e8;">无属性</div>
<div class="a" style="left:1295px;top:195px;width:175px;height:1px;background:#474747;"></div>
<div class="a" style="left:1295px;top:196px;width:175px;height:1px;background:#5c5c5c;"></div>
<div class="a" style="left:1292px;top:426px;width:178px;height:1px;background:#464646;"></div>
<svg style="left:1453px;top:428px" width="12" height="12"><path d="M2 3 L10 3 M4 2 L8 2 M3 4 L9 4 L8.5 11 L3.5 11Z" fill="none" stroke="#7e7e7e" stroke-width="1.1"/></svg>
<div class="a" style="left:1292px;top:440px;width:178px;height:2px;background:#2e2e2e;"></div>
<div class="a" style="left:1292px;top:442px;width:178px;height:13px;background:#393939;"></div>
<div class="a" style="left:1292px;top:442px;width:28px;height:13px;background:#535353;"></div>
<div class="a" style="left:1321px;top:442px;width:28px;height:13px;background:#414141;"></div>
<div class="a" style="left:1350px;top:442px;width:29px;height:13px;background:#414141;"></div>
<div class="t" style="left:1298px;top:445px;font-size:9px;color:#e4e4e4;">图层</div>
<div class="t" style="left:1327px;top:445px;font-size:9px;color:#9c9c9c;">通道</div>
<div class="t" style="left:1356px;top:445px;font-size:9px;color:#9c9c9c;">路径</div>
<div class="a" style="left:1296px;top:458px;width:54px;height:15px;background:linear-gradient(#626262,#4d4d4d);border:1px solid #2f2f2f;border-radius:2px;box-sizing:border-box;"></div>
<svg style="left:1299px;top:461px" width="9" height="9"><circle cx="5.5" cy="3.5" r="2.6" fill="none" stroke="#ddd" stroke-width="1.1"/><path d="M3.6 5.4 L1 8" stroke="#ddd" stroke-width="1.3"/></svg>
<div class="t" style="left:1312px;top:461px;font-size:9.3px;color:#e8e8e8;">类型</div>
<svg style="left:1340px;top:461px" width="5" height="9"><path d="M0 3.5 L2.5 0 L5 3.5Z M0 5.5 L2.5 9 L5 5.5Z" fill="#d8d8d8"/></svg>
<svg style="left:1364px;top:459px" width="106" height="14" fill="none" stroke="#bdbdbd" stroke-width="1.1">
<rect x="2" y="2" width="10" height="9"/><path d="M3 10 L6 6 L8 8 L10 6 L11 10Z" fill="#bdbdbd" stroke="none"/>
<circle cx="27" cy="6.5" r="4" fill="#bdbdbd" stroke="none"/><path d="M24.5 9 L29.5 4" stroke="#535353" stroke-width="1.3"/>
<path d="M39 2 L47 2 M43 2 L43 11 M41 11 L45 11" stroke-width="1.4"/>
<rect x="60" y="3" width="7" height="7"/><rect x="58.5" y="1.5" width="3" height="3" fill="#bdbdbd" stroke="none"/><rect x="65.5" y="1.5" width="3" height="3" fill="#bdbdbd" stroke="none"/><rect x="58.5" y="8.5" width="3" height="3" fill="#bdbdbd" stroke="none"/><rect x="65.5" y="8.5" width="3" height="3" fill="#bdbdbd" stroke="none"/>
<path d="M80 5 L84 1 L88 1 L88 11 L80 11Z" fill="#bdbdbd" stroke="none"/><rect x="78" y="7" width="5" height="5" fill="#8a8a8a" stroke="none"/>
<rect x="103" y="2" width="4" height="10" fill="#bdbdbd" stroke="none"/>
</svg>
<div class="a" style="left:1295px;top:476px;width:175px;height:1px;background:#474747;"></div>
<div class="a" style="left:1295px;top:477px;width:175px;height:1px;background:#5c5c5c;"></div>
<div class="a" style="left:1296px;top:480px;width:84px;height:15px;background:linear-gradient(#626262,#4d4d4d);border:1px solid #2f2f2f;border-radius:2px;box-sizing:border-box;"></div>
<div class="t" style="left:1303px;top:483px;font-size:9.3px;color:#e8e8e8;">正常</div>
<svg style="left:1371px;top:483px" width="5" height="9"><path d="M0 3.5 L2.5 0 L5 3.5Z M0 5.5 L2.5 9 L5 5.5Z" fill="#d8d8d8"/></svg>
<div class="t" style="left:1387px;top:483px;font-size:9.3px;color:#e0e0e0;">不透明度:</div>
<div class="a" style="left:1432px;top:480px;width:28px;height:15px;background:#343434;"></div>
<div class="t" style="left:1434px;top:484px;font-size:9px;color:#e6e6e6;">100%</div>
<div class="a" style="left:1460px;top:480px;width:10px;height:15px;background:linear-gradient(#666,#525252);"></div>
<svg style="left:1463px;top:486px" width="5" height="3"><path d="M0 0 L5 0 L2.5 3Z" fill="#ddd"/></svg>
<div class="a" style="left:1295px;top:498px;width:175px;height:1px;background:#474747;"></div>
<div class="a" style="left:1295px;top:499px;width:175px;height:1px;background:#5c5c5c;"></div>
<div class="t" style="left:1297px;top:504px;font-size:9.3px;color:#e0e0e0;">锁定:</div>
<svg style="left:1325px;top:503px" width="64" height="13">
<g fill="#aaa"><rect x="1" y="2" width="9" height="9" fill="#777"/><rect x="1" y="2" width="3" height="3"/><rect x="7" y="2" width="3" height="3"/><rect x="4" y="5" width="3" height="3"/><rect x="1" y="8" width="3" height="3"/><rect x="7" y="8" width="3" height="3"/></g>
<path d="M16 12.5 C18 12.5 20.5 11 21.5 8.5 L23 10 C21.5 12 19 13 16 12.5Z" fill="#b8b8b8"/><path d="M22 9.5 L29 1.5" stroke="#b8b8b8" stroke-width="1.6"/>
<path d="M40 1 L40 12 M34.5 6.5 L45.5 6.5 M38 3 L40 1 L42 3 M38 10 L40 12 L42 10 M37 4.5 L34.5 6.5 L37 8.5 M43 4.5 L45.5 6.5 L43 8.5" fill="none" stroke="#c0c0c0" stroke-width="1.2"/>
<path d="M55 6 L55 4 C55 1 60 1 60 4 L60 6" fill="none" stroke="#a8a8a8" stroke-width="1.3"/><rect x="53.5" y="6" width="8" height="6" fill="#a8a8a8"/>
</svg>
<div class="t" style="left:1406px;top:504px;font-size:9.3px;color:#e0e0e0;">填充:</div>
<div class="a" style="left:1432px;top:502px;width:28px;height:15px;background:#343434;"></div>
<div class="t" style="left:1434px;top:506px;font-size:9px;color:#e6e6e6;">100%</div>
<div class="a" style="left:1460px;top:502px;width:10px;height:15px;background:linear-gradient(#666,#525252);"></div>
<svg style="left:1463px;top:508px" width="5" height="3"><path d="M0 0 L5 0 L2.5 3Z" fill="#ddd"/></svg>
<div class="a" style="left:1295px;top:519px;width:175px;height:1px;background:#474747;"></div>
<div class="a" style="left:1345px;top:522px;width:125px;height:30px;background:#56657a;"></div>
<div class="a" style="left:1292px;top:552px;width:178px;height:1px;background:#3f3f3f;"></div>
<div class="a" style="left:1315px;top:522px;width:1px;height:30px;background:#3f3f3f;"></div>
<svg style="left:1297px;top:532px" width="12" height="9"><ellipse cx="6" cy="4.5" rx="5.2" ry="3.3" fill="#8c8c8c"/><ellipse cx="6" cy="4.5" rx="2.6" ry="2.6" fill="#3a3a3a"/><circle cx="6.8" cy="3.7" r="0.9" fill="#bbb"/></svg>
<div class="a" style="left:1318px;top:525px;width:25px;height:25px;background-color:#fff;background-image:linear-gradient(45deg,#d6d6d6 25%,transparent 25%,transparent 75%,#d6d6d6 75%),linear-gradient(45deg,#d6d6d6 25%,transparent 25%,transparent 75%,#d6d6d6 75%);background-size:6px 6px;background-position:0 0,3px 3px;border:1px solid #222;box-sizing:border-box;"></div>
<svg style="left:0;top:0" width="1470" height="800" viewBox="0 0 1470 800"><defs><radialGradient id="th0" gradientUnits="userSpaceOnUse" cx="1326.3" cy="532.17" r="4.293991416309012"><stop offset="0" stop-color="#e6d000"/><stop offset="0.25" stop-color="#e4bc20"/><stop offset="0.45" stop-color="#e0a048"/><stop offset="0.65" stop-color="#dd8a7a"/><stop offset="0.85" stop-color="#dc68b4"/><stop offset="1" stop-color="#dd44dc"/></radialGradient></defs><path d="M1327.8 531.5 C1328.3 531.3 1328.4 531.1 1329.1 531.1 C1330.0 531.0 1330.6 531.4 1330.6 532.0 C1330.6 532.7 1330.0 533.1 1329.2 533.1 C1328.5 533.1 1328.0 532.9 1327.5 532.8 C1327.8 533.1 1328.1 533.1 1328.5 533.5 C1328.8 534.1 1328.8 534.7 1328.3 535.1 C1327.7 535.5 1327.2 535.3 1326.8 534.7 C1326.5 534.2 1326.5 533.9 1326.4 533.5 C1326.3 533.9 1326.3 534.2 1326.0 534.7 C1325.7 535.3 1325.2 535.6 1324.6 535.3 C1324.0 535.0 1323.9 534.4 1324.3 533.7 C1324.6 533.2 1324.6 533.4 1324.9 533.0 C1324.4 533.2 1324.2 533.3 1323.5 533.4 C1322.7 533.4 1322.1 533.1 1322.0 532.5 C1322.0 531.8 1322.5 531.4 1323.4 531.4 C1324.1 531.3 1324.6 531.5 1325.1 531.6 C1324.7 531.3 1324.4 531.2 1324.0 530.8 C1323.6 530.2 1323.6 529.5 1324.1 529.1 C1324.6 528.7 1325.2 529.0 1325.7 529.6 C1326.0 530.1 1326.2 530.4 1326.4 530.8 C1326.6 530.4 1326.8 530.1 1327.2 529.6 C1327.7 529.0 1328.3 528.8 1328.8 529.3 C1329.3 529.7 1329.2 530.3 1328.7 530.9 C1328.3 531.4 1328.2 531.2 1327.8 531.5 Z" fill="url(#th0)"/></svg>
<div class="t" style="left:1350px;top:533px;font-size:9.3px;color:#e8e8e8;">图层 5</div>
<div class="a" style="left:1292px;top:582px;width:178px;height:1px;background:#3f3f3f;"></div>
<div class="a" style="left:1315px;top:552px;width:1px;height:30px;background:#3f3f3f;"></div>
<svg style="left:1297px;top:562px" width="12" height="9"><ellipse cx="6" cy="4.5" rx="5.2" ry="3.3" fill="#8c8c8c"/><ellipse cx="6" cy="4.5" rx="2.6" ry="2.6" fill="#3a3a3a"/><circle cx="6.8" cy="3.7" r="0.9" fill="#bbb"/></svg>
<div class="a" style="left:1318px;top:555px;width:25px;height:25px;background-color:#fff;background-image:linear-gradient(45deg,#d6d6d6 25%,transparent 25%,transparent 75%,#d6d6d6 75%),linear-gradient(45deg,#d6d6d6 25%,transparent 25%,transparent 75%,#d6d6d6 75%);background-size:6px 6px;background-position:0 0,3px 3px;border:1px solid #222;box-sizing:border-box;"></div>
<svg style="left:0;top:0" width="1470" height="800" viewBox="0 0 1470 800"><defs><radialGradient id="th1" gradientUnits="userSpaceOnUse" cx="1334.55" cy="560.98" r="4.293991416309012"><stop offset="0" stop-color="#3010e8"/><stop offset="0.25" stop-color="#4a30d0"/><stop offset="0.55" stop-color="#8a7890"/><stop offset="0.85" stop-color="#cdb440"/><stop offset="1" stop-color="#dcc21a"/></radialGradient></defs><path d="M1336.0 560.2 C1336.5 560.1 1336.7 559.9 1337.4 559.9 C1338.2 559.9 1338.8 560.2 1338.8 560.9 C1338.9 561.6 1338.3 561.9 1337.4 561.9 C1336.7 562.0 1336.5 561.8 1336.0 561.7 C1336.4 561.9 1336.5 561.8 1336.9 562.3 C1337.4 562.9 1337.4 563.5 1336.9 563.9 C1336.4 564.3 1335.8 564.1 1335.3 563.5 C1334.9 563.1 1334.8 562.7 1334.6 562.3 C1334.4 562.8 1334.2 563.1 1333.9 563.6 C1333.4 564.2 1332.8 564.4 1332.3 564.0 C1331.8 563.6 1331.8 562.9 1332.3 562.3 C1332.6 561.9 1332.7 562.0 1333.1 561.7 C1332.6 561.9 1332.4 562.0 1331.7 562.0 C1330.9 562.1 1330.3 561.7 1330.3 561.1 C1330.2 560.4 1330.8 560.0 1331.7 560.0 C1332.4 560.0 1332.6 560.2 1333.1 560.3 C1332.7 560.0 1332.6 560.2 1332.2 559.7 C1331.7 559.1 1331.7 558.5 1332.2 558.1 C1332.7 557.6 1333.3 557.8 1333.8 558.4 C1334.2 558.9 1334.3 559.2 1334.5 559.6 C1334.7 559.2 1334.9 558.9 1335.2 558.4 C1335.7 557.8 1336.3 557.6 1336.8 558.0 C1337.3 558.4 1337.3 559.0 1336.8 559.6 C1336.5 560.1 1336.4 560.0 1336.0 560.2 Z" fill="url(#th1)"/></svg>
<div class="t" style="left:1350px;top:563px;font-size:9.3px;color:#e8e8e8;">图层 4</div>
<div class="a" style="left:1292px;top:613px;width:178px;height:1px;background:#3f3f3f;"></div>
<div class="a" style="left:1315px;top:583px;width:1px;height:30px;background:#3f3f3f;"></div>
<svg style="left:1297px;top:593px" width="12" height="9"><ellipse cx="6" cy="4.5" rx="5.2" ry="3.3" fill="#8c8c8c"/><ellipse cx="6" cy="4.5" rx="2.6" ry="2.6" fill="#3a3a3a"/><circle cx="6.8" cy="3.7" r="0.9" fill="#bbb"/></svg>
<div class="a" style="left:1318px;top:586px;width:25px;height:25px;background-color:#fff;background-image:linear-gradient(45deg,#d6d6d6 25%,transparent 25%,transparent 75%,#d6d6d6 75%),linear-gradient(45deg,#d6d6d6 25%,transparent 25%,transparent 75%,#d6d6d6 75%);background-size:6px 6px;background-position:0 0,3px 3px;border:1px solid #222;box-sizing:border-box;"></div>
<svg style="left:0;top:0" width="1470" height="800" viewBox="0 0 1470 800"><defs><radialGradient id="th2" gradientUnits="userSpaceOnUse" cx="1337.18" cy="601.88" r="4.293991416309012"><stop offset="0" stop-color="#0cbc10"/><stop offset="0.5" stop-color="#30c818"/><stop offset="1" stop-color="#9ede10"/></radialGradient></defs><path d="M1333.3 595.2 C1333.8 595.0 1334.3 594.8 1335.0 594.8 C1335.9 594.8 1336.5 595.1 1336.5 595.8 C1336.5 596.5 1335.9 596.8 1335.0 596.8 C1334.3 596.9 1333.9 596.6 1333.4 596.5 C1333.7 596.8 1334.1 596.9 1334.4 597.4 C1334.8 598.0 1334.8 598.7 1334.2 599.0 C1333.7 599.4 1333.1 599.1 1332.7 598.5 C1332.4 598.0 1332.3 597.7 1332.2 597.2 C1332.1 597.7 1332.0 598.0 1331.7 598.5 C1331.3 599.2 1330.8 599.4 1330.2 599.1 C1329.6 598.7 1329.6 598.1 1330.0 597.4 C1330.3 596.9 1330.4 597.1 1330.8 596.7 C1330.3 596.9 1330.2 597.1 1329.5 597.2 C1328.6 597.3 1328.0 597.0 1327.9 596.3 C1327.8 595.7 1328.4 595.3 1329.3 595.2 C1329.9 595.1 1330.5 595.2 1331.0 595.3 C1330.7 595.0 1330.4 594.8 1330.1 594.2 C1329.7 593.6 1329.7 593.0 1330.3 592.6 C1330.9 592.3 1331.4 592.6 1331.8 593.2 C1332.1 593.7 1332.1 594.1 1332.2 594.5 C1332.3 594.1 1332.2 593.7 1332.5 593.2 C1332.9 592.6 1333.5 592.3 1334.1 592.6 C1334.6 593.0 1334.7 593.6 1334.3 594.2 C1334.0 594.8 1333.7 594.9 1333.3 595.2 Z" fill="url(#th2)"/></svg>
<div class="t" style="left:1350px;top:594px;font-size:9.3px;color:#e8e8e8;">图层 3</div>
<div class="a" style="left:1292px;top:643px;width:178px;height:1px;background:#3f3f3f;"></div>
<div class="a" style="left:1315px;top:613px;width:1px;height:30px;background:#3f3f3f;"></div>
<svg style="left:1297px;top:623px" width="12" height="9"><ellipse cx="6" cy="4.5" rx="5.2" ry="3.3" fill="#8c8c8c"/><ellipse cx="6" cy="4.5" rx="2.6" ry="2.6" fill="#3a3a3a"/><circle cx="6.8" cy="3.7" r="0.9" fill="#bbb"/></svg>
<div class="a" style="left:1318px;top:616px;width:25px;height:25px;background-color:#fff;background-image:linear-gradient(45deg,#d6d6d6 25%,transparent 25%,transparent 75%,#d6d6d6 75%),linear-gradient(45deg,#d6d6d6 25%,transparent 25%,transparent 75%,#d6d6d6 75%);background-size:6px 6px;background-position:0 0,3px 3px;border:1px solid #222;box-sizing:border-box;"></div>
<svg style="left:0;top:0" width="1470" height="800" viewBox="0 0 1470 800"><defs><radialGradient id="th3" gradientUnits="userSpaceOnUse" cx="1334.38" cy="634.07" r="4.293991416309012"><stop offset="0" stop-color="#0058e8"/><stop offset="0.35" stop-color="#0090b4"/><stop offset="0.65" stop-color="#00bc80"/><stop offset="1" stop-color="#00d860"/></radialGradient></defs><path d="M1329.7 626.2 C1330.2 625.9 1330.4 625.8 1331.0 625.7 C1331.9 625.6 1332.5 625.8 1332.6 626.5 C1332.7 627.1 1332.2 627.6 1331.3 627.7 C1330.6 627.8 1330.5 627.7 1329.9 627.6 C1330.3 627.8 1330.4 627.6 1330.9 628.1 C1331.4 628.6 1331.5 629.2 1331.1 629.7 C1330.6 630.2 1330.0 630.0 1329.5 629.5 C1329.0 629.1 1328.8 628.8 1328.6 628.4 C1328.5 628.8 1328.3 629.2 1328.0 629.7 C1327.6 630.4 1327.1 630.7 1326.5 630.3 C1325.9 630.0 1325.9 629.4 1326.3 628.7 C1326.6 628.2 1326.7 628.3 1327.0 628.0 C1326.5 628.2 1326.4 628.4 1325.7 628.5 C1324.9 628.6 1324.2 628.3 1324.1 627.7 C1324.0 627.0 1324.6 626.6 1325.4 626.5 C1326.1 626.4 1326.3 626.5 1326.8 626.6 C1326.4 626.3 1326.3 626.5 1325.9 626.1 C1325.4 625.6 1325.2 624.9 1325.7 624.5 C1326.1 624.0 1326.8 624.1 1327.3 624.6 C1327.7 625.0 1328.0 625.3 1328.2 625.8 C1328.3 625.3 1328.4 624.9 1328.7 624.4 C1329.1 623.8 1329.7 623.5 1330.3 623.8 C1330.8 624.2 1330.9 624.8 1330.5 625.4 C1330.2 626.0 1330.1 625.8 1329.7 626.2 Z" fill="url(#th3)"/></svg>
<div class="t" style="left:1350px;top:624px;font-size:9.3px;color:#e8e8e8;">图层 2</div>
<div class="a" style="left:1292px;top:673px;width:178px;height:1px;background:#3f3f3f;"></div>
<div class="a" style="left:1315px;top:643px;width:1px;height:30px;background:#3f3f3f;"></div>
<svg style="left:1297px;top:653px" width="12" height="9"><ellipse cx="6" cy="4.5" rx="5.2" ry="3.3" fill="#8c8c8c"/><ellipse cx="6" cy="4.5" rx="2.6" ry="2.6" fill="#3a3a3a"/><circle cx="6.8" cy="3.7" r="0.9" fill="#bbb"/></svg>
<div class="a" style="left:1318px;top:646px;width:25px;height:25px;background-color:#fff;background-image:linear-gradient(45deg,#d6d6d6 25%,transparent 25%,transparent 75%,#d6d6d6 75%),linear-gradient(45deg,#d6d6d6 25%,transparent 25%,transparent 75%,#d6d6d6 75%);background-size:6px 6px;background-position:0 0,3px 3px;border:1px solid #222;box-sizing:border-box;"></div>
<svg style="left:0;top:0" width="1470" height="800" viewBox="0 0 1470 800"><defs><radialGradient id="th4" gradientUnits="userSpaceOnUse" cx="1329.81" cy="650.26" r="4.293991416309012"><stop offset="0" stop-color="#f01810"/><stop offset="0.25" stop-color="#f03c14"/><stop offset="0.5" stop-color="#f07014"/><stop offset="0.75" stop-color="#eca818"/><stop offset="1" stop-color="#e4c81c"/></radialGradient></defs><path d="M1331.3 649.5 C1331.8 649.4 1332.0 649.2 1332.6 649.2 C1333.5 649.2 1334.1 649.6 1334.1 650.3 C1334.1 650.9 1333.5 651.3 1332.6 651.3 C1332.0 651.3 1331.8 651.1 1331.3 651.0 C1331.6 651.2 1331.6 650.9 1331.9 651.3 C1332.3 651.8 1332.3 652.4 1331.8 652.8 C1331.3 653.2 1330.7 653.1 1330.3 652.6 C1330.0 652.2 1330.0 652.0 1329.8 651.6 C1329.6 652.0 1329.5 652.4 1329.1 652.8 C1328.6 653.4 1328.0 653.6 1327.5 653.2 C1327.0 652.8 1327.0 652.2 1327.5 651.6 C1327.9 651.1 1328.0 651.4 1328.4 651.1 C1328.0 651.4 1327.9 651.7 1327.2 651.8 C1326.4 652.0 1325.7 651.8 1325.6 651.2 C1325.5 650.5 1326.0 650.0 1326.8 649.9 C1327.5 649.7 1328.0 649.8 1328.6 649.8 C1328.2 649.5 1327.9 649.4 1327.5 648.9 C1327.0 648.3 1327.0 647.7 1327.5 647.3 C1328.0 646.9 1328.6 647.1 1329.1 647.7 C1329.5 648.2 1329.6 648.5 1329.8 648.9 C1330.0 648.5 1330.2 648.2 1330.5 647.7 C1331.0 647.1 1331.6 646.9 1332.1 647.3 C1332.6 647.7 1332.6 648.3 1332.1 648.9 C1331.8 649.4 1331.7 649.3 1331.3 649.5 Z" fill="url(#th4)"/></svg>
<div class="t" style="left:1350px;top:654px;font-size:9.3px;color:#e8e8e8;">图层 1</div>
<div class="a" style="left:1292px;top:704px;width:178px;height:1px;background:#3f3f3f;"></div>
<div class="a" style="left:1315px;top:674px;width:1px;height:30px;background:#3f3f3f;"></div>
<svg style="left:1297px;top:684px" width="12" height="9"><ellipse cx="6" cy="4.5" rx="5.2" ry="3.3" fill="#8c8c8c"/><ellipse cx="6" cy="4.5" rx="2.6" ry="2.6" fill="#3a3a3a"/><circle cx="6.8" cy="3.7" r="0.9" fill="#bbb"/></svg>
<div class="a" style="left:1318px;top:677px;width:25px;height:25px;background:#ffffff;border:1px solid #222;box-sizing:border-box;"></div>
<div class="t" style="left:1352px;top:685px;font-size:9.3px;color:#e8e8e8;font-style:italic;">背景</div>
<svg style="left:1453px;top:684px" width="9" height="11"><path d="M2 5 L2 3.5 C2 0.8 7 0.8 7 3.5 L7 5" fill="none" stroke="#9a9a9a" stroke-width="1.2"/><rect x="1" y="5" width="7" height="5.5" fill="#9a9a9a"/></svg>
<svg style="left:1316px;top:523px" width="30" height="30"><path d="M1 6 L1 1 L6 1 M22 1 L28 1 L28 6 M28 22 L28 28 L22 28 M6 28 L1 28 L1 22" fill="none" stroke="#e8e8e8" stroke-width="1.2"/></svg>
<div class="a" style="left:1292px;top:704px;width:178px;height:83px;background:#4b4b4b;"></div>
<div class="a" style="left:1292px;top:786px;width:178px;height:1px;background:#3c3c3c;"></div>
<div class="a" style="left:1292px;top:787px;width:178px;height:13px;background:#535353;"></div>
<svg style="left:1326px;top:789px" width="144" height="11" fill="#bdbdbd">
<path d="M2 5 C2 2 6 2 7 3.5 M9 5 C9 8 5 8 4 6.5" fill="none" stroke="#8a8a8a" stroke-width="1.2"/>
<text x="25" y="9" font-size="10" font-style="italic" font-family="Liberation Serif" fill="#bdbdbd">fx</text>
<rect x="45" y="1" width="10" height="9"/><circle cx="50" cy="5.5" r="2.6" fill="#535353"/>
<circle cx="71" cy="5.5" r="4.3"/><path d="M68 8 L74 3" stroke="#535353" stroke-width="1.4"/>
<path d="M86 3 L90 3 L91 4 L97 4 L97 10 L86 10Z"/>
<path d="M107 2 L113 2 L116 5 L116 10 L107 10Z"/><rect x="105" y="6" width="5" height="5" fill="#888"/>
<path d="M127 3 L135 3 M129 2 L133 2 M128 4 L134 4 L133.5 10.5 L128.5 10.5Z" fill="none" stroke="#bdbdbd" stroke-width="1.1"/>
</svg>
<div class="t" style="left:1100px;top:736px;font-size:35px;font-weight:bold;color:#fff;-webkit-text-stroke:1.6px #fff;text-shadow:2px 2px 0 #000,3px 3px 1px rgba(0,0,0,0.75);">头条</div>
<div class="t" style="left:1181px;top:733px;font-size:41px;color:#fff;text-shadow:2px 2px 0 #000,3px 3px 1px rgba(0,0,0,0.75);">@</div>
<div class="t" style="left:1221px;top:736px;font-size:37px;color:#fff;text-shadow:2px 2px 0 #000,3px 3px 1px rgba(0,0,0,0.75);">阿宏巴拉巴拉</div>
<div class="a" style="left:1177px;top:780px;width:148px;height:24px;background:#f3f3f5;border:1px solid #d8d8dc;border-radius:6px;box-sizing:border-box;"></div>
<svg style="left:1177px;top:780px" width="148" height="20">
<path d="M9 3 L28 2 C29 2 30 3 30 4 L28 20 L7 20 L8 4 C8 3.5 8.5 3 9 3Z" fill="#f5b08a"/>
<path d="M24 7 C22 5 15 5 14 8 C13 11 22 11 22 14 C22 18 14 18 12 15" fill="none" stroke="#fff" stroke-width="3"/>
<rect x="45" y="7.5" width="10" height="6" fill="none" stroke="#3a7fc4" stroke-width="1.8"/><path d="M50 4.5 V17.5" stroke="#3a7fc4" stroke-width="1.8"/>
<path d="M67 6 C63 8 62 13 65 15 C67 17 71 16 72 13 C69 14 66 12 67 6Z" fill="#3a7fc4"/>
<circle cx="79" cy="7" r="1.6" fill="none" stroke="#777" stroke-width="0.9"/><path d="M84 11 L84 13 L82.5 15.5" stroke="#222" stroke-width="1.4" fill="none"/>
<rect x="90.5" y="7.5" width="13" height="8" fill="none" stroke="#3a7fc4" stroke-width="1.2"/><path d="M92 10 H102 M92 12.5 H102 M94 8 V15 M96.5 8 V15 M99 8 V15" stroke="#3a7fc4" stroke-width="0.7"/>
<circle cx="113" cy="8" r="2.6" fill="#9a9a9a"/><path d="M109 17 C109 11 117 11 117 17Z" fill="#9a9a9a"/>
<path d="M124 16 L129.5 10.5 C128.5 8 130 5 133.5 5.5 L131.5 7.5 L133 9 L135 7 C135.5 10.5 132.5 12 130.5 11.5 L125.5 17Z" fill="#3a7fc4"/>
</svg>
</body></html>
